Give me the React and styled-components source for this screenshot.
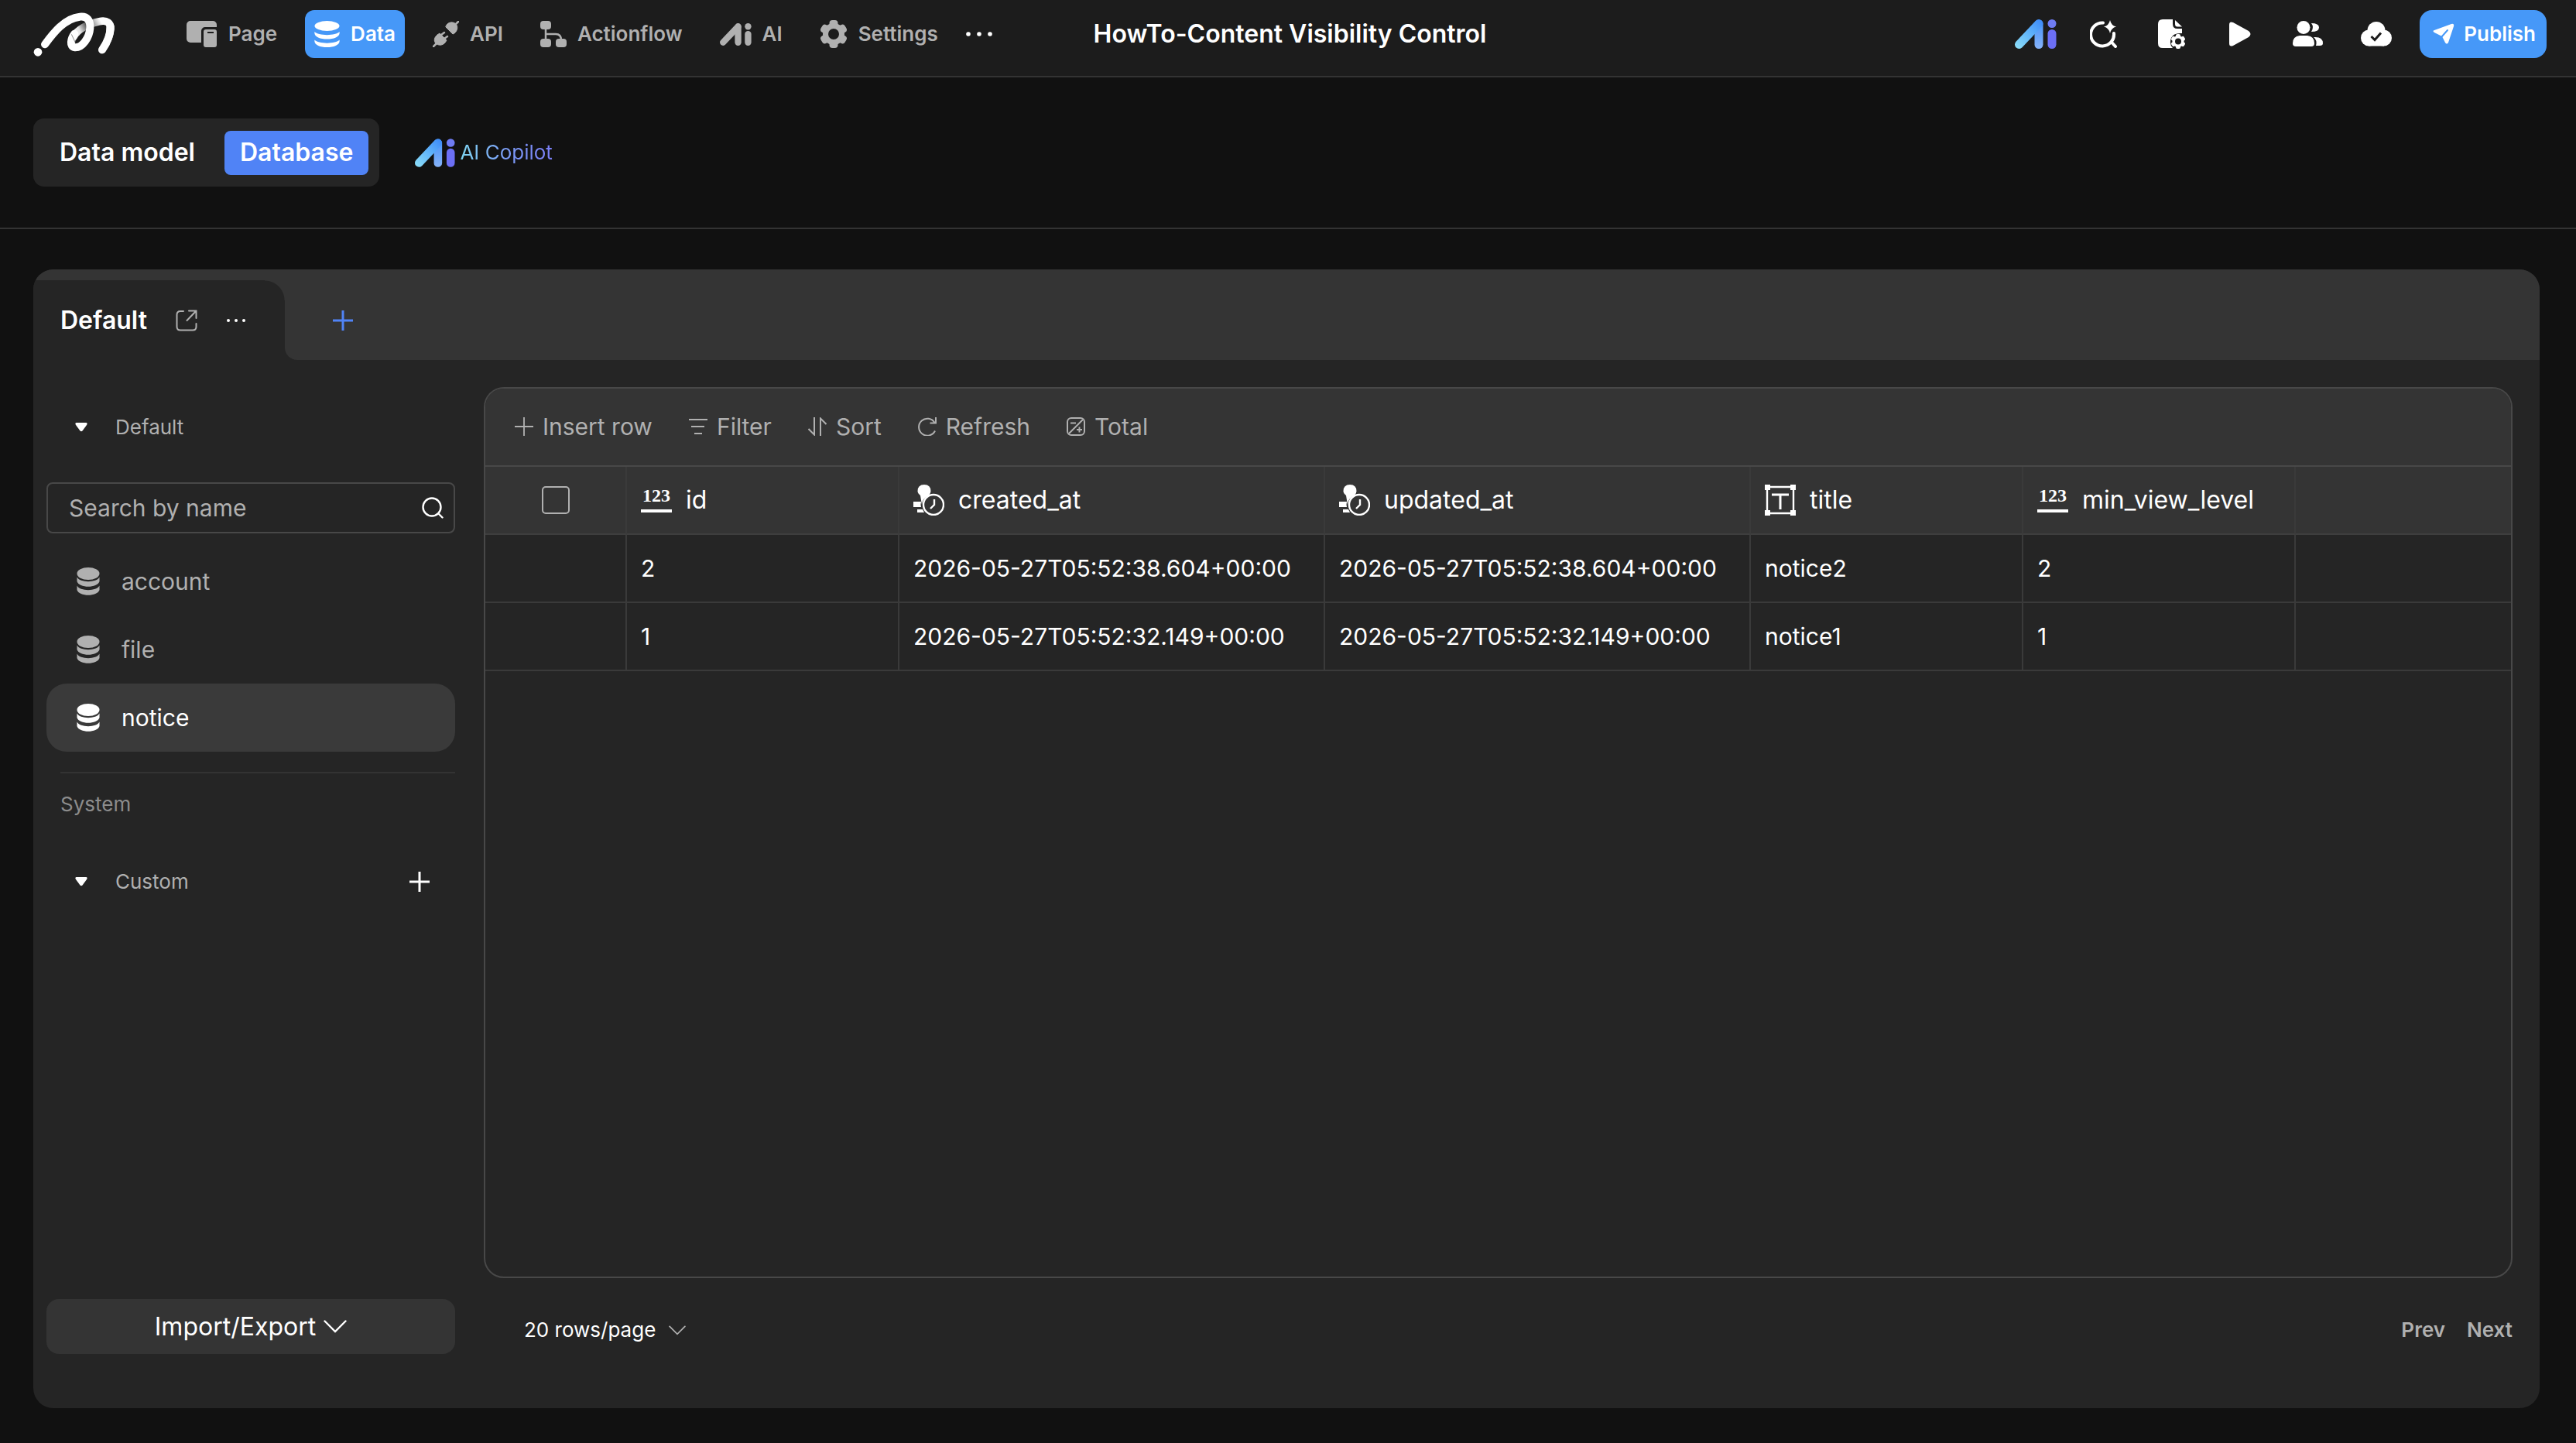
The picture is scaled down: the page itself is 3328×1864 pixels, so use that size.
import React, { useState } from "react";
import styled, { createGlobalStyle, css } from "styled-components";

const colors = {
  page: "#111111",
  header: "#1c1c1c",
  panel: "#252525",
  raised: "#343434",
  selected: "#3a3a3a",
  line: "#333333",
  border: "#484848",
  blue: "#4698f8",
  indigo: "#5083f6",
  text: "#ffffff",
  muted: "#b0b0b0",
  faint: "#8c8c8c",
};

/* ---------- icons ---------- */

const Logo = () => (
  <svg width="106" height="58" viewBox="20 20 318 174" fill="none" aria-hidden="true">
    <defs>
      <linearGradient id="ribbon" gradientUnits="userSpaceOnUse" x1="170" y1="130" x2="306" y2="52">
        <stop offset="0" stopColor="#fff" />
        <stop offset="0.28" stopColor="#e8e8e8" />
        <stop offset="0.5" stopColor="#555" />
        <stop offset="0.64" stopColor="#999" />
        <stop offset="0.85" stopColor="#fff" />
      </linearGradient>
    </defs>
    <path
      d="M176 118C190 88 236 66 276 58C306 52 322 64 320 88C317 118 302 146 287 168"
      stroke="url(#ribbon)"
      strokeWidth="29"
      strokeLinecap="round"
    />
    <path d="M318 76C320 110 304 144 287 168" stroke="#fff" strokeWidth="30" strokeLinecap="round" />
    <path
      d="M65 147C98 102 142 46 200 40C230 36 242 56 240 84C237 122 210 160 182 159C158 156 166 124 180 106"
      stroke="#fff"
      strokeWidth="30"
      strokeLinecap="round"
    />
    <path d="M168 108L184 142" stroke="#555" strokeWidth="2" />
    <circle cx="38" cy="177" r="16" fill="#fff" />
  </svg>
);

const PageIcon = () => (
  <svg width="40" height="34" viewBox="0 0 40 34" fill="currentColor" aria-hidden="true">
    <path d="M5 0h29a5 5 0 0 1 5 5v3H24a5 5 0 0 0-5 5v15H5a5 5 0 0 1-5-5V5a5 5 0 0 1 5-5Z" />
    <path
      fillRule="evenodd"
      d="M25 11h11a3 3 0 0 1 3 3v17a3 3 0 0 1-3 3H25a3 3 0 0 1-3-3V14a3 3 0 0 1 3-3Zm2 3v2h8v-2Z"
    />
  </svg>
);

const DataIcon = () => (
  <svg width="33" height="34" viewBox="0 0 33 34" fill="currentColor" aria-hidden="true">
    <ellipse cx="16.5" cy="6.5" rx="16" ry="6.5" />
    <path d="M0.5 14C5 19.5 28 19.5 32.5 14C34 20 26 23.5 16.5 23.5S-1 20 0.5 14Z" />
    <path d="M0.5 24.5C5 30 28 30 32.5 24.5C34 30.5 26 34 16.5 34S-1 30.5 0.5 24.5Z" />
  </svg>
);

const TableIcon = () => (
  <svg width="30" height="36" viewBox="0 0 30 36" fill="currentColor" aria-hidden="true">
    <ellipse cx="15" cy="8" rx="14.5" ry="8" />
    <path d="M0.5 12.5C4 20 26 20 29.5 12.5V18C27 27 3 27 0.5 18Z" />
    <path d="M0.5 23.5C4 31 26 31 29.5 23.5V29C27 38 3 38 0.5 29Z" />
  </svg>
);

const ApiIcon = () => (
  <svg width="34" height="34" viewBox="0 0 34 34" fill="currentColor" stroke="currentColor" strokeLinecap="round" aria-hidden="true">
    <path d="M29 5L33 1M5 29L1 33" strokeWidth="2.5" />
    <path d="M18 5C21 1 27 1 30 4S32 13 28 16L26 17L17 8Z" strokeWidth="1" />
    <path d="M6 18L9 16L18 25L16 28C13 32 7 32 4 29S2 21 6 18Z" strokeWidth="1" />
    <path d="M11 18L15 15M15 23L19 20" strokeWidth="2.5" />
  </svg>
);

const FlowIcon = () => (
  <svg width="34" height="34" viewBox="0 0 34 34" fill="currentColor" aria-hidden="true">
    <rect x="0" y="0" width="14" height="11" rx="4" />
    <rect x="0" y="23" width="14" height="11" rx="4" />
    <rect x="20" y="23" width="14" height="11" rx="4" />
    <path d="M7 9V25M7 17H20Q27 17 27 25" fill="none" stroke="currentColor" strokeWidth="2.5" />
  </svg>
);

const AiMark = ({ width = 54, colored }) => {
  const id = `ai-${width}`;
  return (
    <svg width={width} height={Math.round((width * 38) / 54)} viewBox="0 0 54 38" fill="none" strokeLinecap="round" aria-hidden="true">
      <defs>
        <linearGradient id={`${id}-a`} gradientUnits="userSpaceOnUse" x1="2" y1="36" x2="34" y2="2">
          <stop offset="0" stopColor="#8adcf8" />
          <stop offset="0.5" stopColor="#62b6fa" />
          <stop offset="1" stopColor="#3f8cf8" />
        </linearGradient>
        <linearGradient id={`${id}-b`} gradientUnits="userSpaceOnUse" x1="30" y1="4" x2="30" y2="38">
          <stop offset="0" stopColor="#4a94f8" />
          <stop offset="1" stopColor="#86b2f8" />
        </linearGradient>
      </defs>
      <path d="M31 6V32.5" stroke={colored ? `url(#${id}-b)` : "currentColor"} strokeWidth="11" />
      <path d="M5.5 32.5L31 5.5" stroke={colored ? `url(#${id}-a)` : "currentColor"} strokeWidth="11" />
      <circle cx="48" cy="5.5" r="5.5" fill={colored ? "#6f7cf4" : "currentColor"} />
      <path d="M48 18.5V32.5" stroke={colored ? "#6c6ff5" : "currentColor"} strokeWidth="11" />
    </svg>
  );
};

const GearIcon = () => (
  <svg width="36" height="36" viewBox="0 0 36 36" aria-hidden="true">
    <g fill="currentColor">
      {[0, 60, 120].map((angle) => (
        <rect key={angle} x="12.5" y="0" width="11" height="36" rx="4" transform={`rotate(${angle} 18 18)`} />
      ))}
      <circle cx="18" cy="18" r="14" />
    </g>
    <circle cx="18" cy="18" r="7" fill={colors.header} />
  </svg>
);

const Dots = ({ width = 34, r = 2.8 }) => (
  <svg width={width} height="8" viewBox={`0 0 ${width} 8`} fill="currentColor" aria-hidden="true">
    <circle cx="3" cy="4" r={r} />
    <circle cx={width / 2} cy="4" r={r} />
    <circle cx={width - 3} cy="4" r={r} />
  </svg>
);

const SparkSearchIcon = () => (
  <svg width="36" height="36" viewBox="0 0 36 36" fill="none" stroke="currentColor" strokeWidth="4" strokeLinecap="round" aria-hidden="true">
    <path d="M17 3.5A15 15 0 1 0 31 17M27.5 28L33 34" />
    <path d="M26 0Q27.5 7 34 8.5Q27.5 10 26 17Q24.5 10 18 8.5Q24.5 7 26 0Z" fill="currentColor" stroke="none" />
  </svg>
);

const FileGearIcon = () => (
  <svg width="36" height="38" viewBox="0 0 36 38" fill="currentColor" aria-hidden="true">
    <path d="M6 0H19V6Q19 12 25 12H31V18Q20 17 17 24Q14 32 19 37H6Q0 37 0 31V6Q0 0 6 0Z" />
    <path d="M22 1L31 9.5H25Q22 9.5 22 6Z" />
    <g>
      {[0, 60, 120].map((angle) => (
        <rect key={angle} x="23" y="19" width="6" height="19" rx="2" transform={`rotate(${angle} 26 28.5)`} />
      ))}
      <circle cx="26" cy="28.5" r="7.5" />
    </g>
    <circle cx="26" cy="28.5" r="4" fill={colors.header} />
  </svg>
);

const PlayIcon = () => (
  <svg width="30" height="34" viewBox="0 0 30 34" fill="currentColor" aria-hidden="true">
    <path d="M1 5Q1 0 6 2L26 13Q31 17 26 21L6 32Q1 34 1 29Z" />
  </svg>
);

const UsersIcon = () => (
  <svg width="40" height="34" viewBox="0 0 40 34" fill="currentColor" aria-hidden="true">
    <circle cx="14" cy="8.5" r="8.5" />
    <path d="M9 19H19Q28 20 28 29Q28 33 24 33H4Q0 33 0 29Q0 20 9 19Z" />
    <path d="M24 3Q34 3 34 8.5T24 14Q28 8 24 3Z" />
    <path d="M27 21Q39 20 39 29Q39 32 35 32H30Q32 25 27 21Z" />
  </svg>
);

const CloudIcon = () => (
  <svg width="40" height="32" viewBox="0 0 40 32" aria-hidden="true">
    <g fill="currentColor">
      <circle cx="20" cy="11.5" r="11.5" />
      <circle cx="10.5" cy="21" r="10.5" />
      <circle cx="29.5" cy="21" r="10.5" />
      <rect x="10" y="14" width="20" height="17.5" />
    </g>
    <path d="M13.5 19L18 23.5L26 14.5" fill="none" stroke={colors.header} strokeWidth="3" />
  </svg>
);

const SendIcon = () => (
  <svg width="28" height="28" viewBox="0 0 28 28" aria-hidden="true">
    <path
      d="M2 9L24 1Q28 0 27 4L20 25Q18 28 16 25L12 17L2 12Q-1 10 2 9Z"
      fill="currentColor"
    />
    <path d="M11 18L19 9" stroke={colors.blue} strokeWidth="2" strokeLinecap="round" />
  </svg>
);

const ShareIcon = () => (
  <svg width="28" height="28" viewBox="0 0 28 28" fill="none" stroke="currentColor" strokeWidth="2" strokeLinecap="round" aria-hidden="true">
    <path d="M10 2H6Q1.5 2 1.5 6.5V22Q1.5 26.5 6 26.5H22Q26.5 26.5 26.5 22V18M17 1.5H26.5V11M26 2L14.5 14" />
  </svg>
);

const PlusIcon = ({ size = 26, weight = 2 }) => (
  <svg width={size} height={size} viewBox="0 0 26 26" fill="none" stroke="currentColor" strokeWidth={weight} aria-hidden="true">
    <path d="M13 0V26M0 13H26" />
  </svg>
);

const CaretIcon = () => (
  <svg width="16" height="12" viewBox="0 0 16 12" fill="currentColor" aria-hidden="true">
    <path d="M1.5 0H14.5Q16.5 0.5 15 3L9.5 10.5Q8 12 6.5 10.5L1 3Q-0.5 0.5 1.5 0Z" />
  </svg>
);

const SearchIcon = () => (
  <svg width="28" height="28" viewBox="0 0 28 28" fill="none" stroke="currentColor" strokeWidth="2.4" strokeLinecap="round" aria-hidden="true">
    <circle cx="13" cy="13" r="11.5" />
    <path d="M21.5 21.5L26.5 26.5" />
  </svg>
);

const ChevronIcon = ({ width = 30 }) => (
  <svg width={width} height={width / 2 + 2} viewBox="0 0 30 17" fill="none" stroke="currentColor" strokeWidth="2.4" strokeLinecap="round" aria-hidden="true">
    <path d="M1.5 1.5L15 15L28.5 1.5" />
  </svg>
);

const FilterIcon = () => (
  <svg width="24" height="24" viewBox="0 0 24 24" stroke="currentColor" strokeWidth="2" aria-hidden="true">
    <path d="M0 3H24M3 12H20M7 21H17" />
  </svg>
);

const SortIcon = () => (
  <svg width="24" height="24" viewBox="0 0 24 24" fill="none" stroke="currentColor" strokeWidth="2" aria-hidden="true">
    <path d="M8 0V22.5L0.5 15M16 24V1.5L23.5 9" />
  </svg>
);

const RefreshIcon = () => (
  <svg width="24" height="24" viewBox="0 0 24 24" fill="none" stroke="currentColor" strokeWidth="2" aria-hidden="true">
    <path d="M22 17.5A11 11 0 1 1 21.5 7M23 0V7.5H15.5" />
  </svg>
);

const TotalIcon = () => (
  <svg width="24" height="24" viewBox="0 0 24 24" fill="none" stroke="currentColor" strokeWidth="2" aria-hidden="true">
    <rect x="1" y="1" width="22" height="22" rx="5" />
    <path d="M3 21L21 3M5 7.5H12M16.5 12.5V19.5M13 16H20" />
  </svg>
);

const TimeIcon = () => (
  <svg width="40" height="40" viewBox="0 0 40 40" aria-hidden="true">
    <g fill="currentColor">
      <path d="M14 0Q22.5 0 22.5 8.5Q22.5 11 20 14Q11 18 11 26L9 14Q5.5 11 5.5 8.5Q5.5 0 14 0Z" />
      <path d="M0 22H10Q9 26 10 29H0ZM5 32H12L14 36H5Z" />
    </g>
    <circle cx="26" cy="26" r="13" fill="none" stroke="currentColor" strokeWidth="2.4" />
    <path d="M27 19V26L22 31" fill="none" stroke="currentColor" strokeWidth="2.4" />
  </svg>
);

const TextIcon = () => (
  <svg width="40" height="40" viewBox="0 0 40 40" fill="none" stroke="currentColor" aria-hidden="true">
    <path d="M3 3H37V37H3Z" strokeWidth="2.4" />
    <path d="M9 13H31M20 13V32" strokeWidth="3" />
    <path d="M0 0H7V7H0ZM33 0H40V7H33ZM0 33H7V40H0ZM33 33H40V40H33Z" fill="currentColor" stroke="none" />
  </svg>
);

const NumberIcon = () => <NumberGlyph aria-hidden="true">123</NumberGlyph>;

/* ---------- data ---------- */

const navItems = [
  { label: "Page", icon: <PageIcon /> },
  { label: "Data", icon: <DataIcon />, active: true },
  { label: "API", icon: <ApiIcon /> },
  { label: "Actionflow", icon: <FlowIcon /> },
  { label: "AI", icon: <AiMark width={41} /> },
  { label: "Settings", icon: <GearIcon /> },
];

const headerActions = [
  { label: "AI assistant", icon: <AiMark colored /> },
  { label: "Smart search", icon: <SparkSearchIcon /> },
  { label: "Project settings", icon: <FileGearIcon /> },
  { label: "Preview", icon: <PlayIcon /> },
  { label: "Members", icon: <UsersIcon /> },
  { label: "Saved", icon: <CloudIcon /> },
];

const tableActions = [
  { label: "Insert row", icon: <PlusIcon size={24} /> },
  { label: "Filter", icon: <FilterIcon /> },
  { label: "Sort", icon: <SortIcon /> },
  { label: "Refresh", icon: <RefreshIcon /> },
  { label: "Total", icon: <TotalIcon /> },
];

const columns = [
  { key: "id", width: 352, icon: <NumberIcon /> },
  { key: "created_at", width: 550, icon: <TimeIcon /> },
  { key: "updated_at", width: 550, icon: <TimeIcon /> },
  { key: "title", width: 352, icon: <TextIcon /> },
  { key: "min_view_level", width: 352, icon: <NumberIcon /> },
];

const rows = [
  {
    id: 2,
    created_at: "2026-05-27T05:52:38.604+00:00",
    updated_at: "2026-05-27T05:52:38.604+00:00",
    title: "notice2",
    min_view_level: 2,
  },
  {
    id: 1,
    created_at: "2026-05-27T05:52:32.149+00:00",
    updated_at: "2026-05-27T05:52:32.149+00:00",
    title: "notice1",
    min_view_level: 1,
  },
];

const tables = ["account", "file", "notice"];

/* ---------- page ---------- */

const Header = () => (
  <TopBar>
    <TopSide>
      <LogoLink href="#home" aria-label="Home">
        <Logo />
      </LogoLink>
      <Nav>
        {navItems.map(({ label, icon, active }) => (
          <NavButton key={label} type="button" $active={active}>
            {icon}
            {label}
          </NavButton>
        ))}
        <IconButton type="button" aria-label="More">
          <Dots />
        </IconButton>
      </Nav>
    </TopSide>
    <ProjectTitle>HowTo-Content Visibility Control</ProjectTitle>
    <TopSide $end>
      <ActionGroup>
        {headerActions.map(({ label, icon }) => (
          <HeaderAction key={label} type="button" aria-label={label}>
            {icon}
          </HeaderAction>
        ))}
      </ActionGroup>
      <PublishButton type="button">
        <SendIcon />
        Publish
      </PublishButton>
    </TopSide>
  </TopBar>
);

const Sidebar = ({ selected, onSelect }) => (
  <SidebarColumn>
    <GroupToggle type="button">
      <CaretIcon />
      Default
    </GroupToggle>
    <SearchBox>
      <SearchInput type="text" placeholder="Search by name" aria-label="Search by name" />
      <SearchIcon />
    </SearchBox>
    <TableList>
      {tables.map((name) => (
        <li key={name}>
          <TableItem type="button" $active={name === selected} onClick={() => onSelect(name)}>
            <TableIcon />
            {name}
          </TableItem>
        </li>
      ))}
    </TableList>
    <SystemLabel>System</SystemLabel>
    <CustomRow>
      <GroupToggle type="button">
        <CaretIcon />
        Custom
      </GroupToggle>
      <IconButton type="button" aria-label="Add custom table">
        <PlusIcon weight={3} />
      </IconButton>
    </CustomRow>
    <ImportButton type="button">
      Import/Export
      <ChevronIcon />
    </ImportButton>
  </SidebarColumn>
);

const DataGrid = () => (
  <GridCard>
    <Toolbar>
      {tableActions.map(({ label, icon }) => (
        <ToolButton key={label} type="button">
          {icon}
          {label}
        </ToolButton>
      ))}
    </Toolbar>
    <Table>
      <colgroup>
        <Col $width={183} />
        {columns.map(({ key, width }) => (
          <Col key={key} $width={width} />
        ))}
        <col />
      </colgroup>
      <thead>
        <tr>
          <HeadCell $center>
            <Checkbox type="checkbox" aria-label="Select all rows" />
          </HeadCell>
          {columns.map(({ key, icon }) => (
            <HeadCell key={key}>
              <HeadLabel>
                {icon}
                {key}
              </HeadLabel>
            </HeadCell>
          ))}
          <HeadCell />
        </tr>
      </thead>
      <tbody>
        {rows.map((row) => (
          <tr key={row.id}>
            <Cell />
            {columns.map(({ key }) => (
              <Cell key={key}>{row[key]}</Cell>
            ))}
            <Cell />
          </tr>
        ))}
      </tbody>
    </Table>
  </GridCard>
);

const App = () => {
  const [selected, setSelected] = useState("notice");

  return (
    <Shell>
      <GlobalStyle />
      <Header />
      <SubHeader>
        <Segment>
          <SegmentButton type="button">Data model</SegmentButton>
          <SegmentButton type="button" $active>
            Database
          </SegmentButton>
        </Segment>
        <CopilotButton type="button">
          <AiMark width={52} colored />
          <CopilotLabel>AI Copilot</CopilotLabel>
        </CopilotButton>
      </SubHeader>
      <Main>
        <Panel>
          <TabStrip>
            <Tab>
              <TabName type="button">Default</TabName>
              <IconButton type="button" aria-label="Open in new window" $muted>
                <ShareIcon />
              </IconButton>
              <IconButton type="button" aria-label="Tab options">
                <Dots width={26} r={2} />
              </IconButton>
            </Tab>
            <TabRest>
              <AddTab type="button" aria-label="Add tab">
                <PlusIcon weight={3} />
              </AddTab>
            </TabRest>
          </TabStrip>
          <Workspace>
            <Sidebar selected={selected} onSelect={setSelected} />
            <Content>
              <DataGrid />
              <Pager>
                <PageSize>
                  <PageSizeSelect aria-label="Rows per page" defaultValue="20">
                    <option value="20">20 rows/page</option>
                    <option value="50">50 rows/page</option>
                  </PageSizeSelect>
                  <ChevronIcon width={22} />
                </PageSize>
                <PagerButtons>
                  <PagerButton type="button">Prev</PagerButton>
                  <PagerButton type="button">Next</PagerButton>
                </PagerButtons>
              </Pager>
            </Content>
          </Workspace>
        </Panel>
      </Main>
    </Shell>
  );
};

export default App;

const GlobalStyle = createGlobalStyle`
  *, *::before, *::after {
    box-sizing: border-box;
  }
  body {
    margin: 0;
    background: ${colors.page};
    color: ${colors.text};
    font-family: "Inter", "Liberation Sans", sans-serif;
    font-size: 30px;
    line-height: 40px;
  }
  button, input, select {
    margin: 0;
    padding: 0;
    border: 0;
    background: none;
    color: inherit;
    font: inherit;
  }
  svg {
    flex: none;
    display: block;
  }
`;

const Shell = styled.div`
  display: flex;
  flex-direction: column;
  min-height: 100vh;
`;

const TopBar = styled.header`
  display: grid;
  grid-template-columns: 1fr auto 1fr;
  align-items: start;
  min-height: 100px;
  padding: 13px 38px 0 43px;
  background: ${colors.header};
  border-bottom: 2px solid ${colors.line};
`;

const TopSide = styled.div`
  display: flex;
  align-items: center;
  justify-content: ${({ $end }) => ($end ? "flex-end" : "flex-start")};
  height: 62px;
`;

const LogoLink = styled.a`
  display: block;
  color: ${colors.text};
`;

const Nav = styled.nav`
  display: flex;
  align-items: center;
  gap: 24px;
  margin-left: 80px;
`;

const NavButton = styled.button`
  display: flex;
  align-items: center;
  gap: 14px;
  height: 62px;
  padding: 0 12px;
  border-radius: 12px;
  color: ${colors.muted};
  font-size: 26px;
  font-weight: 600;

  ${({ $active }) =>
    $active &&
    css`
      background: ${colors.blue};
      color: ${colors.text};
    `}
`;

const IconButton = styled.button`
  display: flex;
  align-items: center;
  color: ${({ $muted }) => ($muted ? colors.muted : colors.text)};
`;

const ProjectTitle = styled.h1`
  margin: 0;
  font-size: 32px;
  font-weight: 600;
  line-height: 62px;
`;

const ActionGroup = styled.div`
  display: flex;
  align-items: center;
`;

const HeaderAction = styled.button`
  display: flex;
  align-items: center;
  justify-content: center;
  width: 88px;
  height: 62px;
`;

const PublishButton = styled.button`
  display: flex;
  align-items: center;
  gap: 12px;
  height: 62px;
  margin-left: 12px;
  padding: 0 14px 0 17px;
  border-radius: 16px;
  background: ${colors.blue};
  font-size: 26px;
  font-weight: 600;
`;

const SubHeader = styled.div`
  display: flex;
  align-items: center;
  gap: 46px;
  min-height: 196px;
  padding: 0 43px;
  border-bottom: 2px solid ${colors.line};
`;

const Segment = styled.div`
  display: flex;
  align-items: center;
  gap: 18px;
  height: 88px;
  padding: 0 14px;
  border-radius: 14px;
  background: ${colors.panel};
`;

const SegmentButton = styled.button`
  height: 57px;
  padding: 0 20px;
  border-radius: 8px;
  background: ${({ $active }) => ($active ? colors.indigo : "transparent")};
  font-size: 32px;
  font-weight: 600;
`;

const CopilotButton = styled.button`
  display: flex;
  align-items: center;
  gap: 6px;
`;

const CopilotLabel = styled.span`
  background: linear-gradient(90deg, #7fd6f2 0%, #7b9cf5 50%, #7a7ef6 100%);
  background-clip: text;
  color: transparent;
  font-size: 26px;
`;

const Main = styled.main`
  display: flex;
  flex: 1;
  padding: 52px 47px 45px 43px;
`;

const Panel = styled.section`
  display: flex;
  flex: 1;
  flex-direction: column;
  overflow: hidden;
  border-radius: 26px;
  background: ${colors.panel};
`;

const TabStrip = styled.div`
  display: flex;
  align-items: stretch;
  height: 117px;
  padding-top: 14px;
  background: linear-gradient(${colors.raised}, ${colors.raised}) top / 100% 14px no-repeat;
`;

/* the raised strip shows through behind the tab's rounded top corner */
const Tab = styled.div`
  display: flex;
  align-items: center;
  gap: 37px;
  width: 325px;
  padding-left: 35px;
  background: radial-gradient(circle at 0 100%, ${colors.panel} 25px, ${colors.raised} 26px) top right / 26px 26px no-repeat,
    linear-gradient(${colors.panel}, ${colors.panel});
`;

const TabRest = styled.div`
  display: flex;
  flex: 1;
  align-items: center;
  padding-left: 62px;
  border-radius: 0 0 0 16px;
  background: ${colors.raised};
`;

const TabName = styled.button`
  font-size: 32px;
  font-weight: 600;
`;

const AddTab = styled(IconButton)`
  color: ${colors.indigo};
`;

const Workspace = styled.div`
  display: flex;
  flex: 1;
  gap: 37px;
  padding: 35px 35px 60px 17px;
`;

const SidebarColumn = styled.aside`
  display: flex;
  flex-direction: column;
  flex: none;
  width: 528px;
  padding-bottom: 10px;
`;

const GroupToggle = styled.button`
  display: flex;
  align-items: center;
  gap: 36px;
  min-height: 104px;
  padding-left: 37px;
  color: ${colors.muted};
  font-size: 26px;

  svg {
    color: ${colors.text};
  }
`;

const SearchBox = styled.div`
  display: flex;
  align-items: center;
  height: 66px;
  margin: 19px 0 18px;
  padding: 0 13px 0 27px;
  border: 2px solid ${colors.border};
  border-radius: 8px;
`;

const SearchInput = styled.input`
  flex: 1;
  min-width: 0;
  outline: none;

  &::placeholder {
    color: ${colors.muted};
    opacity: 1;
  }
`;

const TableList = styled.ul`
  margin: 0;
  padding: 0;
  list-style: none;
`;

const TableItem = styled.button`
  display: flex;
  align-items: center;
  gap: 28px;
  width: 100%;
  height: 88px;
  padding-left: 39px;
  border-radius: 26px;
  background: ${({ $active }) => ($active ? colors.selected : "transparent")};
  color: ${({ $active }) => ($active ? colors.text : colors.muted)};
`;

const SystemLabel = styled.div`
  margin: 26px 0 0 18px;
  padding-top: 20px;
  border-top: 2px solid ${colors.line};
  color: ${colors.faint};
  font-size: 26px;
`;

const CustomRow = styled.div`
  display: flex;
  align-items: center;
  justify-content: space-between;
  margin-top: 28px;
  padding-right: 33px;
`;

const ImportButton = styled.button`
  display: flex;
  align-items: center;
  justify-content: center;
  gap: 10px;
  height: 71px;
  margin-top: auto;
  border-radius: 16px;
  background: ${colors.raised};
  font-size: 32px;
`;

const Content = styled.div`
  display: flex;
  flex: 1;
  flex-direction: column;
  min-width: 0;
`;

const GridCard = styled.div`
  flex: 1;
  overflow: hidden;
  border: 2px solid ${colors.border};
  border-radius: 26px;
`;

const Toolbar = styled.div`
  display: flex;
  align-items: center;
  gap: 47px;
  height: 101px;
  padding: 0 38px 2px;
  border-bottom: 2px solid ${colors.border};
  background: ${colors.raised};
  color: ${colors.muted};
`;

const ToolButton = styled.button`
  display: flex;
  align-items: center;
  gap: 12px;
`;

const Table = styled.table`
  width: 100%;
  table-layout: fixed;
  border-spacing: 0;
`;

const Col = styled.col`
  width: ${({ $width }) => $width}px;
`;

const Cell = styled.td`
  height: 88px;
  padding: 0 18px;
  border-right: 2px solid ${colors.selected};
  border-bottom: 2px solid ${colors.selected};
  white-space: nowrap;

  &:last-child {
    border-right: 0;
  }
`;

const HeadCell = styled(Cell).attrs({ as: "th" })`
  background: ${colors.raised};
  border-bottom-color: #3e3e3e;
  font-size: 32px;
  font-weight: 400;
  text-align: ${({ $center }) => ($center ? "center" : "left")};
`;

const HeadLabel = styled.span`
  display: flex;
  align-items: center;
  gap: 18px;
`;

const NumberGlyph = styled.span`
  width: 40px;
  height: 32px;
  border-bottom: 4px solid ${colors.text};
  font: 700 24px/20px "Liberation Serif", serif;
  text-align: center;
`;

const Checkbox = styled.input`
  appearance: none;
  display: block;
  width: 36px;
  height: 36px;
  margin: 0 auto;
  border: 2px solid ${colors.muted};
  border-radius: 5px;
`;

const Pager = styled.div`
  display: flex;
  align-items: center;
  justify-content: space-between;
  height: 108px;
  padding: 26px 0 0 52px;
  font-size: 26px;
`;

const PageSize = styled.label`
  display: flex;
  align-items: center;
  gap: 16px;
  color: ${colors.muted};
`;

const PageSizeSelect = styled.select`
  appearance: none;
  color: ${colors.text};
`;

const PagerButtons = styled.div`
  display: flex;
  gap: 28px;
`;

const PagerButton = styled.button`
  color: ${colors.muted};
  font-weight: 600;
`;
